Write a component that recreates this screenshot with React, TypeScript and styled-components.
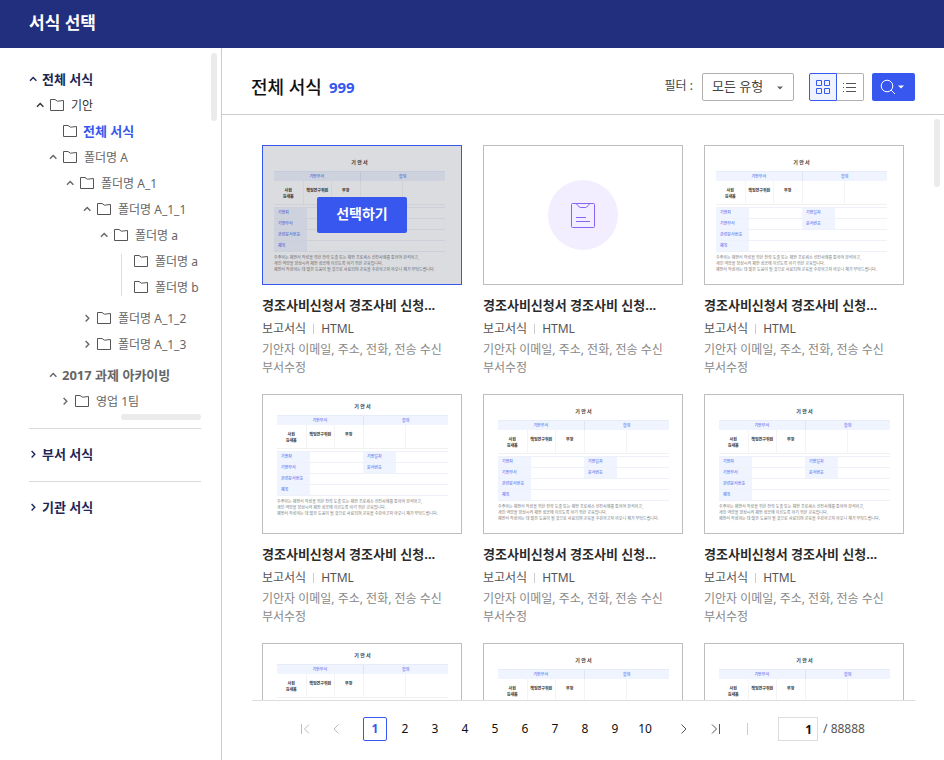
import React from "react";
import styled, { createGlobalStyle, css } from "styled-components";

const BLUE = "#3757ee";
const NAVY = "#1d2656";

const GlobalStyle = createGlobalStyle`
  *, *::before, *::after { box-sizing: border-box; }
  body {
    margin: 0;
    background: #fff;
    color: #333;
    font-family: "Noto Sans", "Noto Sans CJK KR", sans-serif;
    font-size: 12px;
    line-height: 18px;
  }
  button, input, select { font: inherit; color: inherit; margin: 0; padding: 0; }
  button { cursor: pointer; border: 0; background: none; }
  ul { margin: 0; padding: 0; list-style: none; }
  h1, h2, h3, p { margin: 0; }
  svg { display: block; flex: none; }
`;

/* ---------- Page frame ---------- */

const Page = styled.div`
  display: flex;
  flex-direction: column;
  height: 100vh;
`;

const TopBar = styled.header`
  display: flex;
  align-items: center;
  flex: none;
  height: 48px;
  padding: 0 29px 2px;
  background: #222f7e;
  color: #fff;
`;

const TopTitle = styled.h1`
  font-size: 17px;
  line-height: 24px;
  font-weight: 700;
`;

const Body = styled.div`
  display: flex;
  flex: 1;
  min-height: 0;
`;

const ScrollThumb = styled.span<{ $top: number }>`
  position: absolute;
  top: ${(p) => p.$top}px;
  right: 4px;
  width: 6px;
  height: 68px;
  border-radius: 3px;
  background: #ebebeb;
`;

/* ---------- Sidebar ---------- */

const Sidebar = styled.nav`
  position: relative;
  flex: none;
  width: 222px;
  padding: 18px 20px 0 29px;
  border-right: 1px solid #ccc;
`;

const Section = styled.section<{ $divided?: boolean }>`
  ${(p) =>
    p.$divided &&
    css`
      padding: 12px 0 14px;
      border-top: 1px solid #d9d9d9;
    `}
`;

const TreeButton = styled.button<{ $tone?: "section" | "active" | "strong" | "top" }>`
  display: flex;
  align-items: center;
  gap: 6px;
  height: 26px;
  color: #666;
  white-space: nowrap;
  ${(p) => p.$tone === "top" && css`color: #333;`}
  ${(p) =>
    p.$tone === "section" &&
    css`
      gap: 5px;
      color: ${NAVY};
      font-size: 13px;
      font-weight: 700;
    `}
  ${(p) =>
    p.$tone === "strong" &&
    css`
      gap: 5px;
      font-size: 13px;
      font-weight: 700;
    `}
  ${(p) =>
    p.$tone === "active" &&
    css`
      color: ${BLUE};
      font-size: 13px;
      font-weight: 700;
    `}
`;

const FolderLabel = styled.span<{ $lowered: boolean }>`
  padding: ${(p) => (p.$lowered ? "2px 0 0 1px" : 0)};
`;

const ChevronSlot = styled.span`
  flex: none;
  width: 8px;
`;

const Branch = styled.ul<{ $indent: number }>`
  padding-left: ${(p) => p.$indent}px;
`;

const BranchItem = styled.li<{ $spaced?: boolean }>`
  margin-top: ${(p) => (p.$spaced ? 5 : 0)}px;
`;

const LeafGroup = styled.ul`
  margin-left: 21px;
  padding-left: 13px;
  background: linear-gradient(#ddd, #ddd) 0 6px / 1px 42px no-repeat;
`;

const HorizontalThumb = styled.div`
  width: 80px;
  height: 6px;
  margin: 0 0 8px auto;
  border-radius: 3px;
  background: #ebebeb;
`;

const Chevron = ({ open }: { open?: boolean }) => (
  <svg width="8" height="8" viewBox="0 0 8 8" fill="none" stroke="currentColor" strokeWidth="1.4">
    <path d={open ? "M1 5.8L4.2 2.6L7.4 5.8" : "M2.6 1L5.8 4.2L2.6 7.4"} />
  </svg>
);

const Folder = () => (
  <svg width="14" height="12" viewBox="0 0 14 12" fill="none" stroke="#555" strokeWidth="1">
    <path d="M.5 .5H5L7.4 2.2L13.5 1.5V11.5H.5Z" />
  </svg>
);

type NodeProps = {
  label: string;
  open?: boolean;
  leaf?: boolean;
  tone?: "active" | "top";
};

const FolderNode = ({ label, open, leaf, tone }: NodeProps) => (
  <TreeButton type="button" $tone={tone} aria-expanded={leaf ? undefined : !!open}>
    {leaf ? null : <Chevron open={open} />}
    {tone === "active" && <ChevronSlot />}
    <Folder />
    <FolderLabel $lowered={tone !== "active"}>{label}</FolderLabel>
  </TreeButton>
);

const SectionNode = ({ label, open }: { label: string; open?: boolean }) => (
  <TreeButton type="button" $tone="section" aria-expanded={!!open}>
    <Chevron open={open} />
    {label}
  </TreeButton>
);

const FolderTree = () => (
  <Branch $indent={7}>
    <BranchItem>
      <FolderNode label="기안" open tone="top" />
      <Branch $indent={13}>
        <BranchItem>
          <FolderNode label="전체 서식" leaf tone="active" />
        </BranchItem>
        <BranchItem>
          <FolderNode label="폴더명 A" open />
          <Branch $indent={17}>
            <BranchItem>
              <FolderNode label="폴더명 A_1" open />
              <Branch $indent={17}>
                <BranchItem>
                  <FolderNode label="폴더명 A_1_1" open />
                  <Branch $indent={17}>
                    <BranchItem>
                      <FolderNode label="폴더명 a" open />
                      <LeafGroup>
                        <BranchItem>
                          <FolderNode label="폴더명 a" leaf />
                        </BranchItem>
                        <BranchItem>
                          <FolderNode label="폴더명 b" leaf />
                        </BranchItem>
                      </LeafGroup>
                    </BranchItem>
                  </Branch>
                </BranchItem>
                <BranchItem $spaced>
                  <FolderNode label="폴더명 A_1_2" />
                </BranchItem>
                <BranchItem>
                  <FolderNode label="폴더명 A_1_3" />
                </BranchItem>
              </Branch>
            </BranchItem>
          </Branch>
        </BranchItem>
        <BranchItem $spaced>
          <TreeButton type="button" $tone="strong" aria-expanded>
            <Chevron open />
            2017 과제 아카이빙
          </TreeButton>
          <Branch $indent={12}>
            <BranchItem>
              <FolderNode label="영업 1팀" />
            </BranchItem>
          </Branch>
        </BranchItem>
      </Branch>
    </BranchItem>
  </Branch>
);

/* ---------- Main header ---------- */

const Main = styled.main`
  display: flex;
  flex: 1;
  flex-direction: column;
  min-width: 0;
`;

const ListHeader = styled.div`
  display: flex;
  flex: none;
  align-items: center;
  height: 67px;
  padding: 12px 29px 0;
  border-bottom: 1px solid #ccc;
`;

const ListTitle = styled.h2`
  color: #111;
  font-size: 18px;
  line-height: 24px;
  font-weight: 500;
`;

const Count = styled.span`
  margin: 0 auto 0 7px;
  color: ${BLUE};
  font-size: 15px;
  font-weight: 700;
`;

const FilterLabel = styled.label`
  margin-right: 9px;
  padding-bottom: 2px;
  color: #444;
`;

const SelectBox = styled.span`
  position: relative;
  display: block;
  color: #666;

  svg {
    position: absolute;
    top: 13px;
    right: 11px;
    pointer-events: none;
  }
`;

const FilterSelect = styled.select`
  display: block;
  width: 92px;
  height: 28px;
  padding: 0 9px 2px;
  border: 1px solid #b0b0b0;
  border-radius: 2px;
  background: #fff;
  color: #444;
  appearance: none;
  font-size: 13px;
`;

const ViewToggle = styled.div`
  display: flex;
  margin: 0 8px 0 15px;
`;

const ViewButton = styled.button<{ $active?: boolean }>`
  display: flex;
  align-items: center;
  justify-content: center;
  width: ${(p) => (p.$active ? 28 : 27)}px;
  height: 28px;
  border: 1px solid ${(p) => (p.$active ? BLUE : "#b0b0b0")};
  border-left-width: ${(p) => (p.$active ? 1 : 0)}px;
  border-radius: ${(p) => (p.$active ? "2px 0 0 2px" : "0 2px 2px 0")};
  background: ${(p) => (p.$active ? "#eff3fe" : "#fff")};
`;

const SearchButton = styled.button`
  display: flex;
  align-items: center;
  justify-content: center;
  gap: 2px;
  width: 43px;
  height: 28px;
  padding-right: 3px;
  border-radius: 2px;
  background: ${BLUE};
  color: #fff;
`;

const Caret = () => (
  <svg width="6" height="4" viewBox="0 0 6 4" fill="currentColor">
    <path d="M0 .5H6L3 3.5Z" />
  </svg>
);

/* ---------- Cards ---------- */

const ScrollArea = styled.div`
  position: relative;
  flex: 1;
  min-height: 0;
  overflow: hidden;
`;

const CardGrid = styled.div`
  display: grid;
  grid-template-columns: repeat(3, minmax(0, 1fr));
  gap: 17px 21px;
  padding: 30px 40px;
`;

const Thumb = styled.div<{ $selected?: boolean }>`
  position: relative;
  aspect-ratio: 10 / 7;
  overflow: hidden;
  border: 1px solid ${(p) => (p.$selected ? BLUE : "#bdbdbd")};
  background: #fff;
`;

const ThumbCover = styled.div<{ $dim?: boolean }>`
  position: absolute;
  inset: 0;
  display: flex;
  align-items: center;
  justify-content: center;
  background: ${(p) => (p.$dim ? "rgba(12, 18, 40, 0.15)" : "transparent")};
`;

const PickButton = styled.button`
  width: 90px;
  height: 36px;
  padding-bottom: 2px;
  border-radius: 2px;
  background: ${BLUE};
  color: #fff;
  font-size: 14px;
  font-weight: 700;
`;

const IconDisc = styled.span`
  display: flex;
  align-items: center;
  justify-content: center;
  width: 70px;
  height: 70px;
  border-radius: 50%;
  background: #f2eeff;
`;

const CardTitle = styled.h3`
  margin-top: 11px;
  color: #2b2b2b;
  font-size: 13px;
  line-height: 18px;
  font-weight: 700;
  white-space: nowrap;
`;

const Meta = styled.p`
  display: flex;
  align-items: center;
  gap: 7px;
  height: 16px;
  margin-top: 7px;
  color: #555;
`;

const MetaRule = styled.span`
  width: 1px;
  height: 10px;
  background: #ccc;
`;

const Description = styled.p`
  max-width: 190px;
  margin-top: 4px;
  color: #888;
  word-break: keep-all;
`;

/* ---------- Miniature form inside a card ---------- */

const Sheet = styled.div<{ $inset: number; $top: number }>`
  padding: ${(p) => p.$top}px ${(p) => 28 - p.$inset}px 0 ${(p) => p.$inset - 1}px;
  color: #333;
  font-size: 4px;
  line-height: 6px;
`;

const SheetTitle = styled.div`
  height: 12px;
  font-size: 5px;
  font-weight: 700;
  text-align: center;
`;

const SheetHead = styled.div`
  display: grid;
  grid-template-columns: 1fr 1fr;
  height: 10px;
  border-top: 1px solid #e6ecf9;
  background: #eff4fe;
  color: ${BLUE};
  line-height: 9px;
  text-align: center;

  span + span {
    border-left: 1px solid #dde4f3;
  }
`;

const SheetSigns = styled.div`
  display: grid;
  grid-template-columns: 2fr 2fr 2fr 3fr 3fr;
  height: 24px;
  margin-bottom: 2px;
  border-bottom: 1px solid #f1f1f1;
  font-weight: 700;
  text-align: center;

  span {
    padding-top: 7px;
    white-space: nowrap;
  }
  span + span {
    border-left: 1px solid #f4f4f4;
  }
`;

const SheetRow = styled.div`
  display: grid;
  grid-template-columns: 33fr 53fr 33fr 52fr;
  height: 11px;
  border-top: 1px solid #eef1f7;
  line-height: 10px;
`;

const SheetLabel = styled.span`
  padding-left: 4px;
  background: #eff4fe;
  color: ${BLUE};
  white-space: nowrap;
`;

const SheetNotes = styled.div`
  padding-top: 3px;
  border-top: 1px solid #eef1f7;
  color: #777;
  white-space: nowrap;
`;

const sheetRows: [string, string?][] = [
  ["기안자", "기안일자"],
  ["기안부서", "문서번호"],
  ["관련문서번호"],
  ["제목"],
];

const FormSheet = ({ inset, top, short }: { inset: number; top: number; short?: boolean }) => (
  <Sheet $inset={inset} $top={top}>
    <SheetTitle>기 안 서</SheetTitle>
    <SheetHead>
      <span>기안부서</span>
      <span>합의</span>
    </SheetHead>
    <SheetSigns>
      <span>
        사원
        <br />
        김새봄
      </span>
      <span>책임연구위원</span>
      <span>부장</span>
      <span />
      <span />
    </SheetSigns>
    {sheetRows.map(([first, second]) => (
      <SheetRow key={first}>
        <SheetLabel>{first}</SheetLabel>
        <span />
        {second && !short && <SheetLabel>{second}</SheetLabel>}
      </SheetRow>
    ))}
    <SheetNotes>
      수주하는 제안서 작성을 위한 전략 도출 또는 제안 프로세스 선진사례를 통하여 분석하고,
      <br />
      개인 역량을 향상시켜 제안 성공에 이르도록 하기 위한 교육입니다.
      <br />
      제안서 작성하는 데 많은 도움이 될 것으로 사료되며 교육을 수강하고자 하오니 재가 부탁드립니다.
    </SheetNotes>
  </Sheet>
);

const ClipboardIcon = () => (
  <svg width="24" height="25" viewBox="0 0 24 25" fill="none" stroke="#8763f6" strokeWidth="1">
    <rect x=".5" y=".5" width="23" height="24" rx="1" />
    <path d="M5 .5C6.6 1 7.4 4.5 9.5 4.5H14.5C16.6 4.5 17.4 1 19 .5M5 14.5H15M5 18.5H19" />
  </svg>
);

type CardData = { kind: "selected" | "icon" | "form"; inset: number; top: number };

const cards: CardData[] = [
  { kind: "selected", inset: 12, top: 13 },
  { kind: "icon", inset: 12, top: 13 },
  { kind: "form", inset: 12, top: 13 },
  { kind: "form", inset: 15, top: 8 },
  { kind: "form", inset: 15, top: 13 },
  { kind: "form", inset: 15, top: 13 },
  { kind: "form", inset: 15, top: 8 },
  { kind: "form", inset: 15, top: 13 },
  { kind: "form", inset: 15, top: 13 },
];

const FormCard = ({ kind, inset, top }: CardData) => (
  <article>
    <Thumb $selected={kind === "selected"}>
      {kind !== "icon" && <FormSheet inset={inset} top={top} short={kind === "selected"} />}
      {kind === "selected" && (
        <ThumbCover $dim>
          <PickButton type="button">선택하기</PickButton>
        </ThumbCover>
      )}
      {kind === "icon" && (
        <ThumbCover>
          <IconDisc>
            <ClipboardIcon />
          </IconDisc>
        </ThumbCover>
      )}
    </Thumb>
    <CardTitle>경조사비신청서 경조사비 신청...</CardTitle>
    <Meta>
      보고서식
      <MetaRule />
      HTML
    </Meta>
    <Description>기안자 이메일, 주소, 전화, 전송 수신 부서수정</Description>
  </article>
);

/* ---------- Pagination ---------- */

const Pager = styled.footer`
  display: flex;
  flex: none;
  align-items: center;
  justify-content: center;
  height: 60px;
  margin: 0 29px 0 30px;
  padding: 0 9px 3px 0;
  border-top: 1px solid #ddd;
  color: #111;
`;

const PagerGroup = styled.div<{ $gap: number }>`
  display: flex;
  align-items: center;
  gap: ${(p) => p.$gap}px;
`;

const PageButton = styled.button<{ $current?: boolean }>`
  width: 24px;
  height: 24px;
  border-radius: 2px;
  ${(p) =>
    p.$current &&
    css`
      border: 1px solid ${BLUE};
      color: ${BLUE};
      font-weight: 700;
    `}
`;

const ArrowButton = styled.button`
  display: flex;
  align-items: center;
  justify-content: center;
  width: 24px;
  height: 24px;
  color: #555;

  &:disabled {
    color: #bbb;
    cursor: default;
  }
`;

const PageNumbers = styled(PagerGroup)`
  margin: 0 15px;
`;

const PagerRule = styled.span`
  width: 1px;
  height: 12px;
  margin: 0 30px 0 19px;
  background: #ccc;
`;

const PageInput = styled.input`
  width: 40px;
  height: 24px;
  padding: 0 5px;
  border: 1px solid #ddd;
  font-weight: 700;
  text-align: right;
`;

const PageTotal = styled.span`
  margin-left: 5px;
  color: #555;
`;

const Arrow = ({ d }: { d: string }) => (
  <svg width="10" height="10" viewBox="0 0 10 10" fill="none" stroke="currentColor" strokeWidth="1">
    <path d={d} />
  </svg>
);

const pages = [1, 2, 3, 4, 5, 6, 7, 8, 9, 10];

export default function App() {
  return (
    <Page>
      <GlobalStyle />
      <TopBar>
        <TopTitle>서식 선택</TopTitle>
      </TopBar>
      <Body>
        <Sidebar>
          <Section>
            <SectionNode label="전체 서식" open />
            <FolderTree />
            <HorizontalThumb />
          </Section>
          <Section $divided>
            <SectionNode label="부서 서식" />
          </Section>
          <Section $divided>
            <SectionNode label="기관 서식" />
          </Section>
          <ScrollThumb $top={5} />
        </Sidebar>
        <Main>
          <ListHeader>
            <ListTitle>전체 서식</ListTitle>
            <Count>999</Count>
            <FilterLabel htmlFor="type-filter">필터 :</FilterLabel>
            <SelectBox>
              <FilterSelect id="type-filter">
                <option>모든 유형</option>
              </FilterSelect>
              <Caret />
            </SelectBox>
            <ViewToggle>
              <ViewButton type="button" $active aria-label="바둑판 보기" aria-pressed>
                <svg width="14" height="14" viewBox="0 0 14 14" fill="none" stroke={BLUE}>
                  <path d="M.5 .5H5.5V5.5H.5ZM8.5 .5H13.5V5.5H8.5ZM.5 8.5H5.5V13.5H.5ZM8.5 8.5H13.5V13.5H8.5Z" />
                </svg>
              </ViewButton>
              <ViewButton type="button" aria-label="목록 보기" aria-pressed={false}>
                <svg width="14" height="11" viewBox="0 0 14 11" fill="none" stroke="#555">
                  <path d="M0 1.5H1M3 1.5H13M0 5.5H1M3 5.5H13M0 9.5H1M3 9.5H13" />
                </svg>
              </ViewButton>
            </ViewToggle>
            <SearchButton type="button" aria-label="검색">
              <svg width="16" height="16" viewBox="0 0 16 16" fill="none" stroke="currentColor">
                <circle cx="7" cy="7" r="5.8" />
                <path d="M11.2 11.2L15 15" />
              </svg>
              <Caret />
            </SearchButton>
          </ListHeader>
          <ScrollArea>
            <CardGrid>
              {cards.map((card, i) => (
                <FormCard key={i} {...card} />
              ))}
            </CardGrid>
            <ScrollThumb $top={4} />
          </ScrollArea>
          <Pager>
            <PagerGroup $gap={7}>
              <ArrowButton type="button" disabled aria-label="처음">
                <Arrow d="M1.5 0V10M9 .5L4.5 5L9 9.5" />
              </ArrowButton>
              <ArrowButton type="button" disabled aria-label="이전">
                <Arrow d="M7.5 .5L3 5L7.5 9.5" />
              </ArrowButton>
            </PagerGroup>
            <PageNumbers $gap={6}>
              {pages.map((n) => (
                <PageButton key={n} type="button" $current={n === 1}>
                  {n}
                </PageButton>
              ))}
            </PageNumbers>
            <PagerGroup $gap={8}>
              <ArrowButton type="button" aria-label="다음">
                <Arrow d="M2.5 .5L7 5L2.5 9.5" />
              </ArrowButton>
              <ArrowButton type="button" aria-label="마지막">
                <Arrow d="M1 .5L5.5 5L1 9.5M8.5 0V10" />
              </ArrowButton>
            </PagerGroup>
            <PagerRule />
            <PageInput type="text" defaultValue="1" aria-label="페이지" />
            <PageTotal>/ 88888</PageTotal>
          </Pager>
        </Main>
      </Body>
    </Page>
  );
}
